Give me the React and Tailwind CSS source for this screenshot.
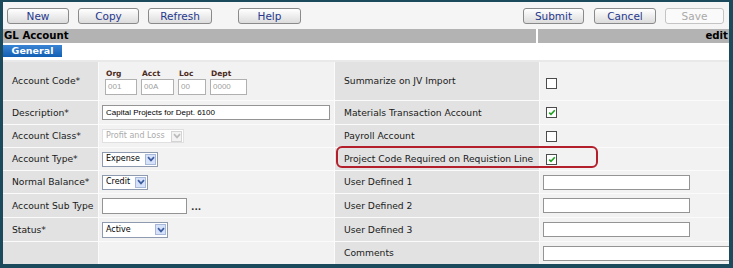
import React from "react";

const btn =
  "h-[16px] rounded-[3px] border border-[#8a8a8a] bg-gradient-to-b from-white to-[#dcdcdc] text-[10.5px] leading-none text-[#26388e] flex items-center justify-center";

function Chevron({ color = "#3f5ea0" }) {
  return (
    <svg width="8" height="6" viewBox="0 0 8 6">
      <path d="M1 1.2 L4 4.4 L7 1.2" fill="none" stroke={color} strokeWidth="1.7" />
    </svg>
  );
}

function Select({ value, className, disabled }) {
  return (
    <div
      className={`flex items-center justify-between overflow-hidden whitespace-nowrap bg-white border ${
        disabled ? "border-[#e0e0e0] text-[#ababab]" : "border-[#8d9ab0] text-black"
      } ${className}`}
    >
      <span className="pl-[3px] text-[8px] leading-none">{value}</span>
      <span
        className={`mr-px flex h-[11px] w-[11px] shrink-0 items-center justify-center border ${
          disabled ? "border-[#d4d4d4] bg-[#f3f3f3]" : "border-[#a8b8d8] bg-[#d6e2fa]"
        }`}
      >
        <Chevron color={disabled ? "#bcbcbc" : "#3f5ea0"} />
      </span>
    </div>
  );
}

function Check({ checked }) {
  return (
    <div className="flex h-[11px] w-[11px] items-center justify-center border border-[#4c4c4c] bg-white">
      {checked && (
        <svg width="8" height="7" viewBox="0 0 8 7">
          <path d="M1.2 3.6 L3 5.4 L6.8 1.2" fill="none" stroke="#21a121" strokeWidth="1.6" />
        </svg>
      )}
    </div>
  );
}

const label = "flex items-center whitespace-nowrap bg-[#e2e2e2] pl-[9px] text-[9.2px] text-[#1a1a1a]";
const value = "flex items-center bg-[#f2f2f2]";
const input = "h-[15px] border border-[#949494] bg-white";

export default function App() {
  return (
    <div className="relative h-[268px] w-[733px] bg-[#1b4a5d] pb-[4px] pl-[3px] pr-[4px] pt-[2px] font-['DejaVu_Sans',sans-serif]">
      <div className="flex h-full flex-col overflow-hidden bg-white">
        {/* toolbar */}
        <div className="flex h-[27px] shrink-0 items-start bg-[#f5f5f5] pt-[6px]">
          <div className="flex pl-[4px]">
            <div className={`${btn} w-[62px]`}>New</div>
            <div className={`${btn} ml-[9px] w-[61px]`}>Copy</div>
            <div className={`${btn} ml-[9px] w-[64px]`}>Refresh</div>
            <div className={`${btn} ml-[26px] w-[63px]`}>Help</div>
          </div>
          <div className="ml-auto flex pr-[5px]">
            <div className={`${btn} w-[61px]`}>Submit</div>
            <div className={`${btn} ml-[10px] w-[62px]`}>Cancel</div>
            <div className="ml-[9px] flex h-[16px] w-[59px] items-center justify-center rounded-[3px] border border-[#c4c4c4] bg-[#fafafa] text-[10.5px] leading-none text-[#a9a9a9]">
              Save
            </div>
          </div>
        </div>

        {/* header */}
        <div className="flex h-[14px] shrink-0 text-[10.2px] font-bold leading-[14px] text-black">
          <div className="w-[533px] bg-[#b3b3b3] pl-[1px]">GL Account</div>
          <div className="w-[2px] bg-white" />
          <div className="flex-1 bg-[#b3b3b3] pr-[1px] text-right">edit</div>
        </div>

        {/* tabs */}
        <div className="h-[17px] shrink-0 bg-white pt-[2px]">
          <div className="flex h-[12px] w-[59px] items-center justify-center bg-gradient-to-b from-[#3a84d4] to-[#0f5fb4] text-[9.5px] font-bold leading-none text-white">
            General
          </div>
        </div>
        <div className="h-[2px] shrink-0 bg-[#e9e9e9]" />

        {/* form */}
        <div className="grid flex-1 grid-cols-[95px_235px_204px_189px] grid-rows-[38px_23px_22px_22px_22px_23px_23px_22px] gap-px bg-[#fbfbfb]">
          <div className={label}>Account Code*</div>
          <div className={`${value} pl-[6px]`}>
            <div className="flex gap-[4px] pt-[2px]">
              {[
                ["Org", "001", "w-[32px]"],
                ["Acct", "00A", "w-[33px]"],
                ["Loc", "00", "w-[28px]"],
                ["Dept", "0000", "w-[37px]"],
              ].map(([l, v, w]) => (
                <div key={l} className="flex flex-col">
                  <span className="pl-px text-[7.5px] font-bold leading-[9px] text-[#4b2a20]">{l}</span>
                  <div className={`mt-[1px] flex h-[16px] items-center border border-[#b0b0b0] bg-white pl-[2px] font-['Liberation_Sans',sans-serif] text-[8px] text-[#a0a0a0] ${w}`}>
                    {v}
                  </div>
                </div>
              ))}
            </div>
          </div>
          <div className={label}>Summarize on JV Import</div>
          <div className={`${value} pl-[6px] pt-[4px]`}>
            <Check />
          </div>

          <div className={label}>Description*</div>
          <div className={`${value} pl-[3px]`}>
            <div className={`${input} flex w-[228px] items-center pl-[3px] font-['Liberation_Sans',sans-serif] text-[8px] text-black`}>
              Capital Projects for Dept. 6100
            </div>
          </div>
          <div className={label}>Materials Transaction Account</div>
          <div className={`${value} pl-[6px]`}>
            <Check checked />
          </div>

          <div className={label}>Account Class*</div>
          <div className={`${value} pl-[3px]`}>
            <Select value="Profit and Loss" disabled className="h-[14px] w-[82px]" />
          </div>
          <div className={label}>Payroll Account</div>
          <div className={`${value} pl-[6px]`}>
            <Check />
          </div>

          <div className={label}>Account Type*</div>
          <div className={`${value} pl-[3px]`}>
            <Select value="Expense" className="h-[15px] w-[56px]" />
          </div>
          <div className={label}>Project Code Required on Requistion Line</div>
          <div className={`${value} pl-[6px]`}>
            <Check checked />
          </div>

          <div className={label}>Normal Balance*</div>
          <div className={`${value} pl-[3px]`}>
            <Select value="Credit" className="h-[15px] w-[46px]" />
          </div>
          <div className={label}>User Defined 1</div>
          <div className={`${value} pl-[3px]`}>
            <div className={`${input} w-[147px]`} />
          </div>

          <div className={label}>Account Sub Type</div>
          <div className={`${value} pl-[3px]`}>
            <div className={`${input} h-[16px] w-[85px]`} />
            <span className="ml-[4px] self-end pb-[5px] text-[9px] font-bold leading-none text-[#333]">...</span>
          </div>
          <div className={label}>User Defined 2</div>
          <div className={`${value} pl-[3px]`}>
            <div className={`${input} w-[147px]`} />
          </div>

          <div className={label}>Status*</div>
          <div className={`${value} pl-[3px]`}>
            <Select value="Active" className="h-[16px] w-[66px]" />
          </div>
          <div className={label}>User Defined 3</div>
          <div className={`${value} pl-[3px]`}>
            <div className={`${input} w-[147px]`} />
          </div>

          <div className="bg-[#e2e2e2]" />
          <div className="bg-[#f2f2f2]" />
          <div className={label}>Comments</div>
          <div className={`${value} overflow-hidden pl-[3px]`}>
            <div className={`${input} w-[220px] shrink-0`} />
          </div>
        </div>
      </div>

      {/* highlight annotation */}
      <div className="absolute left-[336px] top-[146px] h-[22px] w-[262px] rounded-[6px] border-2 border-[#b3202b]" />
    </div>
  );
}
